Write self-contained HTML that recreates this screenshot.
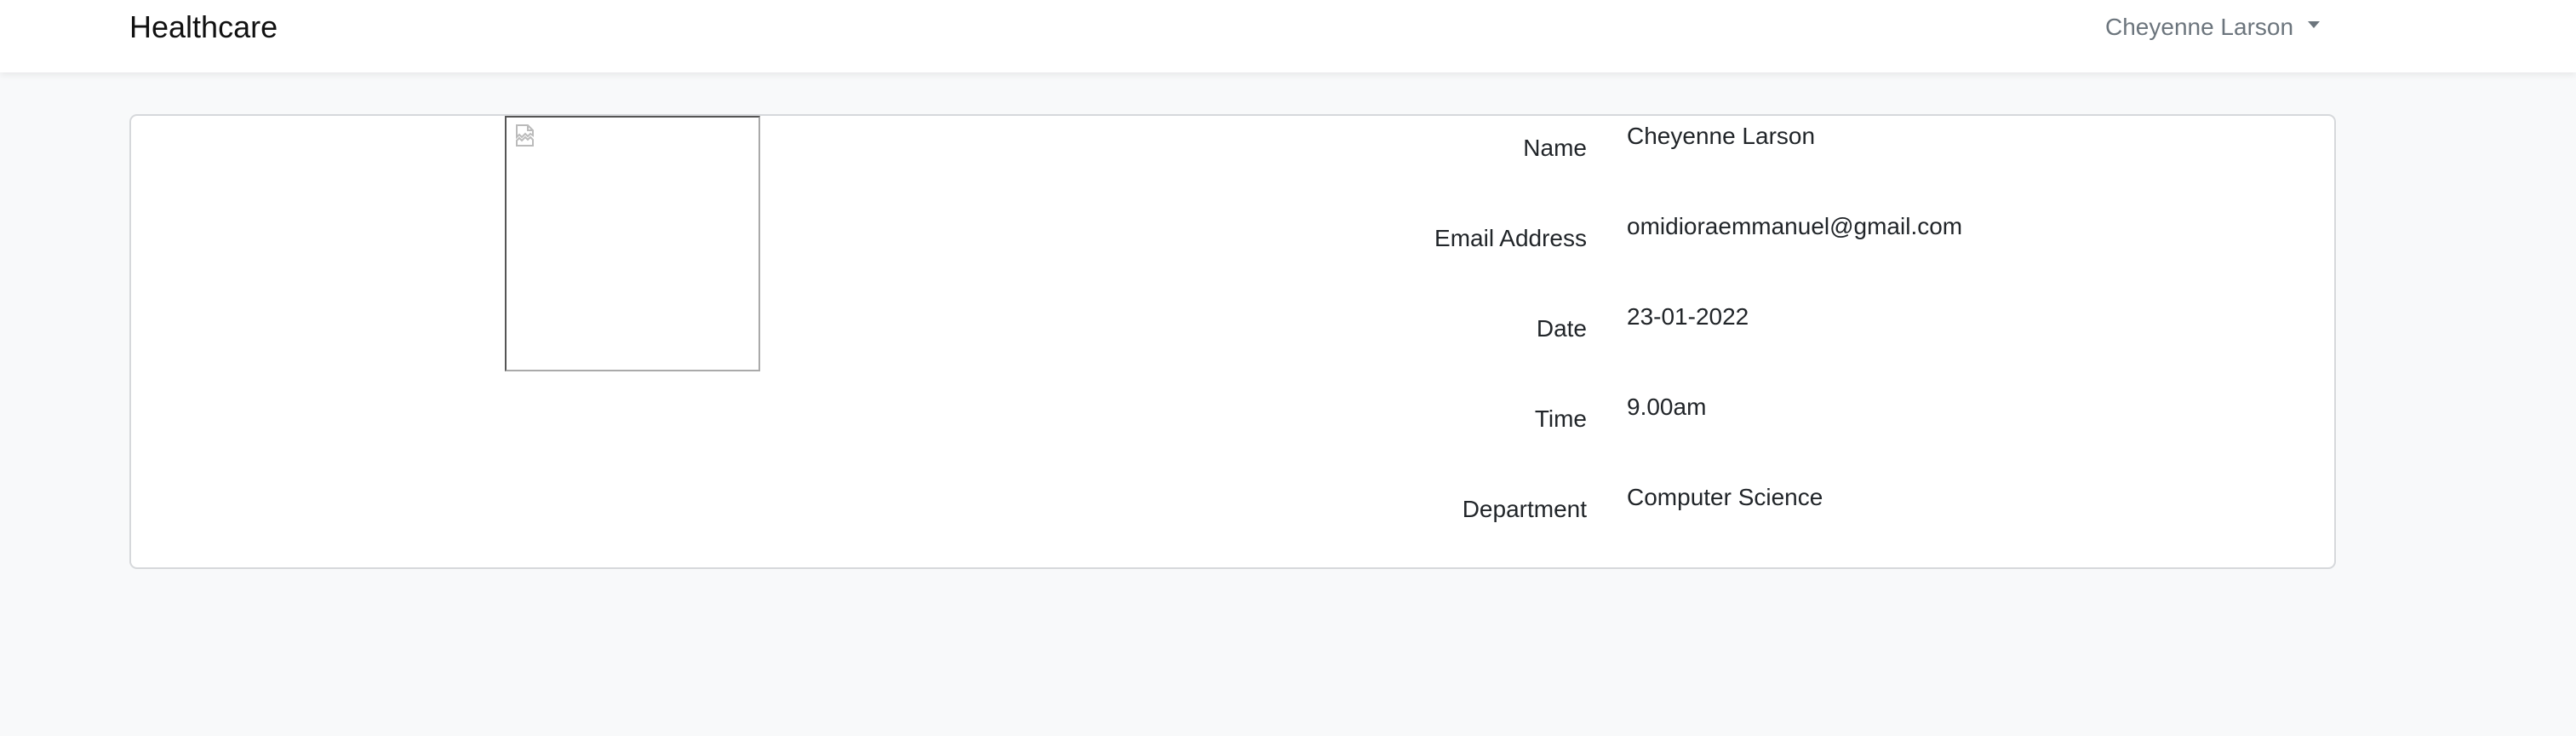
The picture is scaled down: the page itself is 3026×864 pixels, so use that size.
<!DOCTYPE html>
<html><head><meta charset="utf-8"><style>
html,body{margin:0;padding:0;}
body{width:3026px;height:864px;background:#f8f9fa;font-family:"Liberation Sans",sans-serif;position:relative;overflow:hidden;color:#212529;}
.nav{position:absolute;left:0;top:0;width:3026px;height:85px;background:#fff;box-shadow:0 3px 8px rgba(0,0,0,0.07);}
.brand{position:absolute;left:152px;top:11px;font-size:36px;color:#111;}
.user{position:absolute;left:2473px;top:16px;font-size:28px;color:#6c757d;}
.caret{position:absolute;left:2711px;top:25px;width:0;height:0;border-left:7px solid transparent;border-right:7px solid transparent;border-top:8px solid #6c757d;}
.card{position:absolute;left:152px;top:134px;width:2588px;height:530px;background:#fff;border:2px solid #d6d8db;border-radius:9px;}
.img{position:absolute;left:593px;top:136px;width:296px;height:296px;border-top:2px solid #555;border-left:2px solid #555;border-right:2px solid #aaa;border-bottom:2px solid #aaa;background:#fff;}
.lbl{position:absolute;right:1162px;font-size:28px;text-align:right;white-space:nowrap;}
.val{position:absolute;left:1911px;font-size:28px;white-space:nowrap;}
</style></head><body>
<div class="nav"><div class="brand">Healthcare</div><div class="user">Cheyenne Larson</div><div class="caret"></div></div>
<div class="card"></div>
<div class="img"><svg style="position:absolute;left:10px;top:7px" width="26" height="28" viewBox="0 0 26 28" fill="none" stroke="#bbb" stroke-width="2"><path d="M2 2h13l6 6v6l-3-2-3 3-3-3-4 4-3-3-3 3z"/><path d="M15 2v6h6"/><path d="M2 20l3-3 3 3 4-4 3 3 3-3 3 3v7H2z"/></svg></div>
<div class="lbl" style="top:158px">Name</div><div class="val" style="top:144px">Cheyenne Larson</div>
<div class="lbl" style="top:264px">Email Address</div><div class="val" style="top:250px">omidioraemmanuel@gmail.com</div>
<div class="lbl" style="top:370px">Date</div><div class="val" style="top:356px">23-01-2022</div>
<div class="lbl" style="top:476px">Time</div><div class="val" style="top:462px">9.00am</div>
<div class="lbl" style="top:582px">Department</div><div class="val" style="top:568px">Computer Science</div>
</body></html>
